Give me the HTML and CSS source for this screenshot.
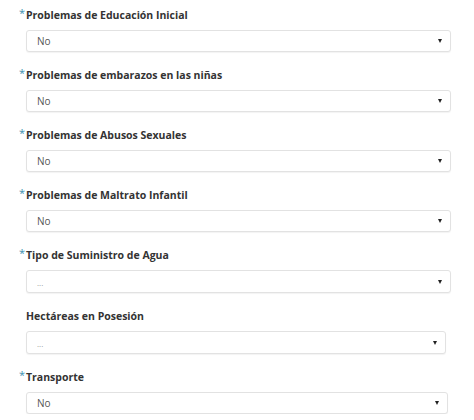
FILE: index.html
```html
<!DOCTYPE html>
<html lang="es">
<head>
<meta charset="utf-8">
<link rel="stylesheet" href="styles.css">
</head>
<body>
<div class="form">
  <div class="group">
    <div class="label"><span class="req">*</span>Problemas de Educación Inicial</div>
    <div class="select"><span class="value">No</span><span class="arrow"></span></div>
  </div>
  <div class="group">
    <div class="label"><span class="req">*</span>Problemas de embarazos en las niñas</div>
    <div class="select"><span class="value">No</span><span class="arrow"></span></div>
  </div>
  <div class="group">
    <div class="label"><span class="req">*</span>Problemas de Abusos Sexuales</div>
    <div class="select"><span class="value">No</span><span class="arrow"></span></div>
  </div>
  <div class="group">
    <div class="label"><span class="req">*</span>Problemas de Maltrato Infantil</div>
    <div class="select"><span class="value">No</span><span class="arrow"></span></div>
  </div>
  <div class="group">
    <div class="label"><span class="req">*</span>Tipo de Suministro de Agua</div>
    <div class="select tall"><span class="value dots">...</span><span class="arrow"></span></div>
  </div>
  <div class="group">
    <div class="label"><span class="req blank"></span>Hectáreas en Posesión</div>
    <div class="select tall narrow"><span class="value dots">...</span><span class="arrow"></span></div>
  </div>
  <div class="group">
    <div class="label"><span class="req">*</span>Transporte</div>
    <div class="select mid"><span class="value">No</span><span class="arrow"></span></div>
  </div>
</div>
</body>
</html>
```
FILE: styles.css
```css
html, body {
  margin: 0;
  padding: 0;
  background: #ffffff;
}
body {
  font-family: "Open Sans", "Liberation Sans", sans-serif;
  color: #333333;
}
.form {
  display: flex;
  flex-direction: column;
  padding: 7px 0 0 19px;
  gap: 15px;
}
.group {
  display: flex;
  flex-direction: column;
  gap: 6px;
}
.label {
  font-size: 10.5px;
  font-weight: 700;
  line-height: 17px;
  height: 17px;
  color: #333333;
  display: flex;
  align-items: flex-start;
}
.req {
  color: #3b8fb0;
  font-size: 11px;
  line-height: 11px;
  width: 7px;
  margin-top: 0;
  font-weight: 400;
}
.select {
  width: 425px;
  margin-left: 7px;
  height: 22px;
  box-sizing: border-box;
  border: 1px solid #e2e2e2;
  border-radius: 3px;
  box-shadow: 0 1px 1px rgba(0, 0, 0, 0.05);
  background: #ffffff;
  display: flex;
  align-items: center;
  justify-content: space-between;
  padding: 0 8px 0 10px;
}
.select.tall {
  height: 23px;
}
.select.narrow {
  width: 420px;
}
.select.mid {
  width: 422px;
}
.value {
  font-size: 10px;
  color: #555555;
}
.value.dots {
  font-size: 8px;
  color: #999999;
  padding-top: 2px;
}
.arrow {
  width: 0;
  height: 0;
  border-left: 2.5px solid transparent;
  border-right: 2.5px solid transparent;
  border-top: 4px solid #222222;
}
```
